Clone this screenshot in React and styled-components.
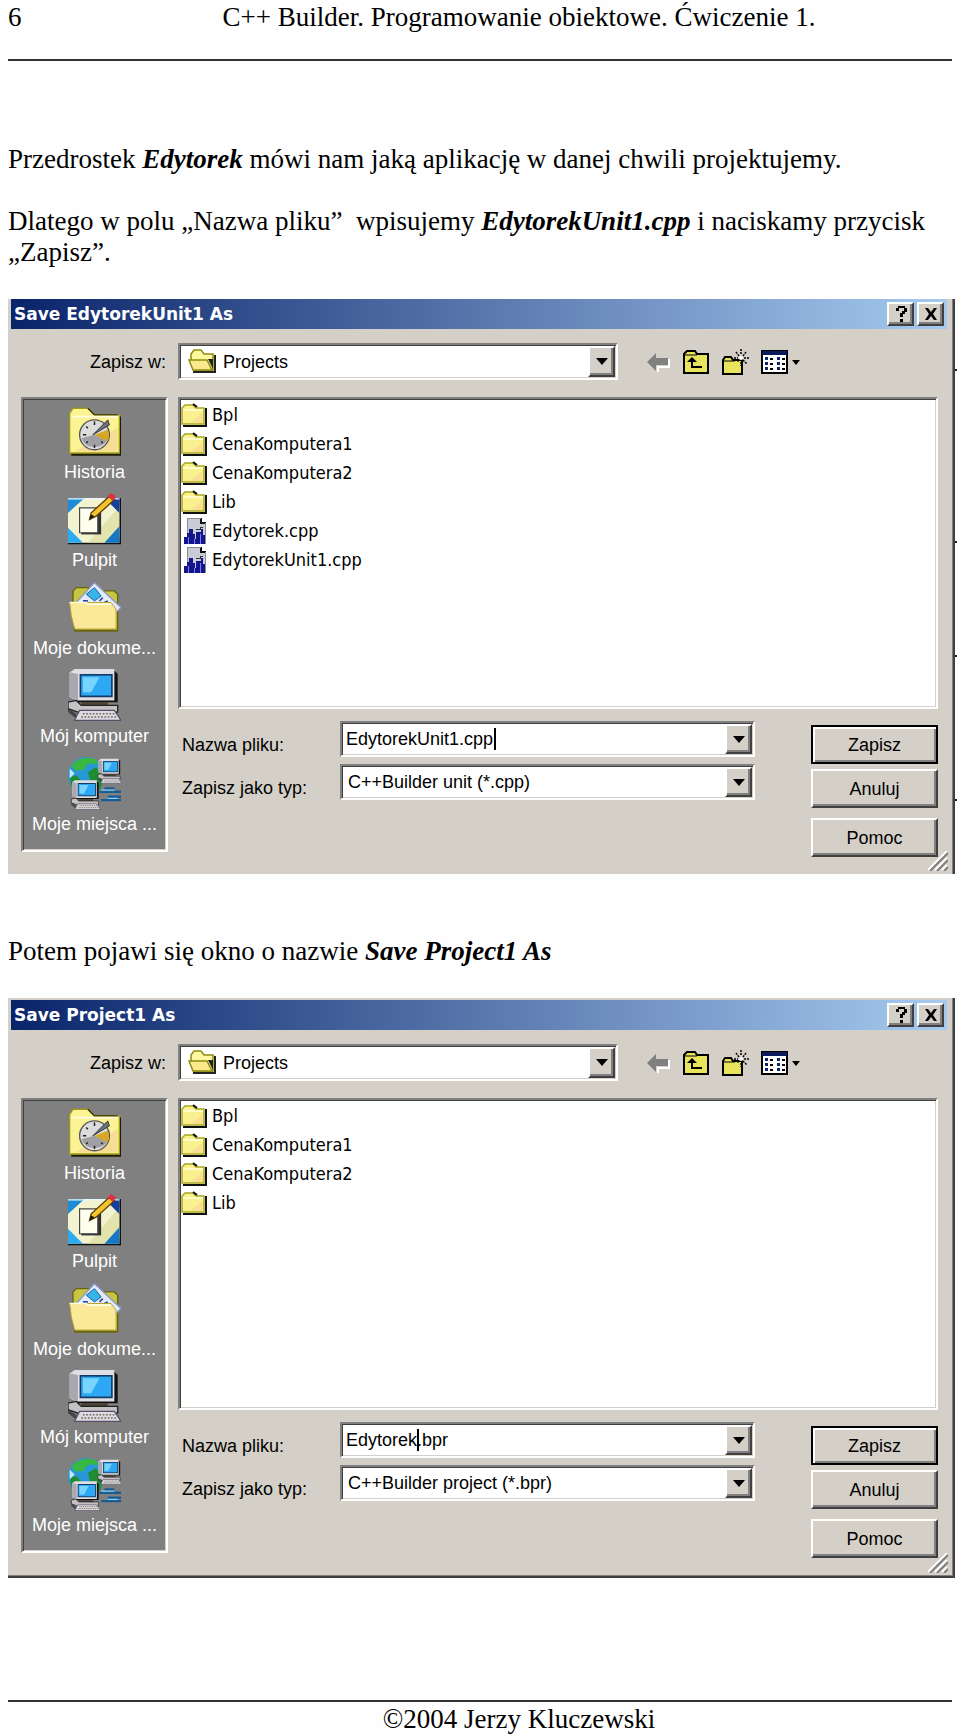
import React from "react";
import styled, { createGlobalStyle, css } from "styled-components";

const folders = ["Bpl", "CenaKomputera1", "CenaKomputera2", "Lib"];
const sources = ["Edytorek.cpp", "EdytorekUnit1.cpp"];

const App = () => (
  <>
    <GlobalStyle />
    <Page>
      <Header>
        <span>6</span>
        <HeaderTitle>C++ Builder. Programowanie obiektowe. Ćwiczenie 1.</HeaderTitle>
      </Header>
      <Rule />
      <Article>
        <Paragraph>
          Przedrostek <Term>Edytorek</Term> mówi nam jaką aplikację w danej chwili projektujemy.
        </Paragraph>
        <Paragraph>
          Dlatego w polu „Nazwa pliku”&nbsp; wpisujemy <Term>EdytorekUnit1.cpp</Term> i naciskamy
          przycisk „Zapisz”.
        </Paragraph>
        <SaveDialog
          id="unit"
          title="Save EdytorekUnit1 As"
          files={sources}
          fileName="EdytorekUnit1.cpp"
          fileType="C++Builder unit (*.cpp)"
          caretAt={148}
          marks={[70, 242, 356, 500]}
        />
        <Paragraph $spaced>
          Potem pojawi się okno o nazwie <Term>Save Project1 As</Term>
        </Paragraph>
        <SaveDialog
          id="project"
          title="Save Project1 As"
          files={[]}
          fileName="Edytorek.bpr"
          fileType="C++Builder project (*.bpr)"
          caretAt={71}
          marks={[]}
          framed
        />
      </Article>
      <Footer>
        <Rule />
        <FooterText>©2004 Jerzy Kluczewski</FooterText>
      </Footer>
    </Page>
  </>
);

export default App;

const SaveDialog = ({ id, title, files, fileName, fileType, caretAt, marks, framed }) => {
  const [name, setName] = React.useState(fileName);

  return (
    <Window $framed={framed} aria-label={title}>
      <TitleBar>
        <Title>{title}</Title>
        <TitleButton aria-label="Pomoc kontekstowa">
          <HelpIcon />
        </TitleButton>
        <TitleButton aria-label="Zamknij">
          <CloseIcon />
        </TitleButton>
      </TitleBar>

      <Body>
        <LookInLabel htmlFor={`${id}-folder`}>Zapisz w:</LookInLabel>
        <Toolbar>
          <LookIn>
            <OpenFolderSlot>
              <OpenFolderIcon />
            </OpenFolderSlot>
            <Select id={`${id}-folder`} $withIcon>
              <option>Projects</option>
            </Select>
            <DropArrow />
          </LookIn>
          <ToolButton aria-label="Wstecz"><BackIcon /></ToolButton>
          <ToolButton aria-label="W górę"><UpFolderIcon /></ToolButton>
          <ToolButton aria-label="Nowy folder"><NewFolderIcon /></ToolButton>
          <ToolButton aria-label="Widok"><ViewsIcon /></ToolButton>
        </Toolbar>

        <Places>
          {places.map(({ label, Icon }) => (
            <Place key={label}>
              <Icon />
              <PlaceLabel>{label}</PlaceLabel>
            </Place>
          ))}
        </Places>

        <Main>
          <FileList>
            {folders.map((f) => (
              <FileRow key={f}><FolderIcon />{f}</FileRow>
            ))}
            {files.map((f) => (
              <FileRow key={f}><CppIcon />{f}</FileRow>
            ))}
          </FileList>

          <Form>
            <Fields>
              <FieldLabel htmlFor={`${id}-name`}>Nazwa pliku:</FieldLabel>
              <Field>
                <Input id={`${id}-name`} value={name} onChange={(e) => setName(e.target.value)} />
                <Caret $at={caretAt} />
                <DropArrow />
              </Field>
              <FieldLabel htmlFor={`${id}-type`}>Zapisz jako typ:</FieldLabel>
              <Field>
                <Select id={`${id}-type`}>
                  <option>{fileType}</option>
                </Select>
                <DropArrow />
              </Field>
            </Fields>
            <Actions>
              <ActionButton $default>Zapisz</ActionButton>
              <ActionButton>Anuluj</ActionButton>
              <ActionButton $apart>Pomoc</ActionButton>
            </Actions>
          </Form>
        </Main>
      </Body>

      <Grip>
        <GripIcon />
      </Grip>
      {marks.map((m) => (
        <MarginMark key={m} $top={m} />
      ))}
    </Window>
  );
};

/* ---------- icons ---------- */

const DropArrow = () => (
  <ArrowBox aria-hidden="true">
    <svg width="12" height="7" viewBox="0 0 12 7">
      <path d="M0 0H12L6 7Z" fill="#000" />
    </svg>
  </ArrowBox>
);

const HelpIcon = () => (
  <svg width="12" height="16" viewBox="0 0 12 16" shapeRendering="crispEdges">
    <path d="M1 2H3V0H10V2H12V6H10V8H8V11H5V7H7V5H9V2H4V5H1ZM5 13H8V16H5Z" fill="#000" />
  </svg>
);

const CloseIcon = () => (
  <svg width="14" height="12" viewBox="0 0 14 12">
    <path d="M1 0H4L7 4L10 0H13L9 6L13 12H10L7 8L4 12H1L5 6Z" fill="#000" />
  </svg>
);

const BackIcon = () => (
  <svg width="24" height="26" viewBox="0 0 24 26">
    <path d="M11 23V18H22V10" fill="none" stroke="#fff" strokeWidth="2" />
    <path d="M0 13L9 4V9H21V16H9V22Z" fill="#808080" />
  </svg>
);

const UpFolderIcon = () => (
  <svg width="26" height="26" viewBox="0 0 26 26">
    <path d="M1 24V5L4 2H12L14 5H25V24Z" fill="#e8e45c" stroke="#000" strokeWidth="2" />
    <path d="M1 6H14" stroke="#000" strokeWidth="1" />
    <path d="M9 10V18H19" fill="none" stroke="#000" strokeWidth="2" />
    <path d="M4 13L9 8L14 13Z" fill="#000" />
  </svg>
);

const NewFolderIcon = () => (
  <svg width="28" height="28" viewBox="0 0 28 28">
    <path d="M2 26V12L4 9H10L12 12H21V26Z" fill="#e8e45c" stroke="#000" strokeWidth="2" />
    <path d="M2 13H14" stroke="#000" strokeWidth="1" />
    <path d="M20 1V7M20 14V18M13 10H17M23 10H28M15 4L18 8M25 4L22 8M22 12L26 16M18 12L16 14" stroke="#000" strokeWidth="1.5" strokeDasharray="2 1" />
    <circle cx="20" cy="10" r="2" fill="#fff" />
  </svg>
);

const ViewsIcon = () => (
  <svg width="40" height="24" viewBox="0 0 40 24">
    <rect x="1" y="1" width="25" height="22" fill="#fff" stroke="#000" strokeWidth="2" />
    <rect x="1" y="1" width="25" height="4" fill="#0a1a5c" />
    {[7, 12, 17].map((y) => (
      <g key={y}>
        <path d={`M4 ${y}H7V${y + 3}H4ZM16 ${y}H19V${y + 3}H16Z`} fill="#0a246a" />
        <path d={`M9 ${y + 2}H12M21 ${y + 2}H24`} stroke="#000" strokeWidth="2" />
      </g>
    ))}
    <path d="M31 10H39L35 15Z" fill="#000" />
  </svg>
);

const OpenFolderIcon = () => (
  <svg width="28" height="24" viewBox="0 0 28 24">
    <path d="M5 23H27V6" fill="none" stroke="#222" strokeWidth="2" />
    <path d="M3 10V5L6 1H13L16 5H25V21H6Z" fill="#fdf8a0" stroke="#8c8c10" strokeWidth="1.5" />
    <path d="M1 11H19L24 21H5Z" fill="#fbe98c" stroke="#8c8c10" strokeWidth="1.5" />
    <path d="M20 10L25 20V10Z" fill="#222" />
  </svg>
);

const FolderIcon = () => (
  <svg width="26" height="24" viewBox="0 0 26 24">
    <path d="M2 23H25V5" fill="none" stroke="#111" strokeWidth="2" />
    <path d="M1 21V5L4 2H12L15 5H23V21Z" fill="#fbf08e" stroke="#a8a820" strokeWidth="1.5" />
    <path d="M12 1L16 4" stroke="#111" strokeWidth="2" />
    <path d="M2 7H22" stroke="#fffcc8" strokeWidth="2" />
    <path d="M22 10V20H9Z" fill="#f6d493" opacity=".6" />
  </svg>
);

const CppIcon = () => (
  <svg width="26" height="28" viewBox="0 0 26 28" shapeRendering="crispEdges">
    <path d="M6 1H21L25 6V27H6Z" fill="#c9ccd6" />
    <path d="M20 1V6H25" fill="#fff" stroke="#111" strokeWidth="2" />
    <path d="M6 27V1H20M24 6V27" fill="none" stroke="#8a8c98" />
    <path d="M3 20H6V16H8V12H12V17H14V22H15V15H20V12H22V18H24V27H3Z" fill="#14148c" />
    <path d="M7 20V27M13 22V27M19 17V27" stroke="#7c7cf0" />
    <path d="M15 12H19V10H22" stroke="#333" fill="none" strokeWidth="1" />
  </svg>
);

const HistoryIcon = () => (
  <svg width="53" height="53" viewBox="0 0 32 32">
    <path d="M2 30H32V7" fill="none" stroke="#1c1c00" strokeWidth="1.4" />
    <path d="M1 29V5L3 2H12L16 6H31V29Z" fill="#fbf394" stroke="#a09c14" strokeWidth=".8" />
    <path d="M12 2L16 6H30" fill="none" stroke="#333200" strokeWidth=".8" />
    <path d="M2 7H30" stroke="#fffde0" />
    <path d="M30 14V28H4Z" fill="#f4cf92" opacity=".6" />
    <circle cx="16" cy="18" r="9" fill="#dcdcdc" stroke="#555" strokeWidth=".8" />
    <path d="M8 20A9 9 0 0 0 24 21L16 18Z" fill="#a0a0a4" />
    <path d="M16 18L24 15A9 9 0 0 1 24 22Z" fill="#d8a824" />
    <path d="M16 10V12M9 18H11M11 13L12 14M11 23L12 22M16 24V26M21 23L20 22" stroke="#222" strokeWidth=".9" />
    <path d="M15 18L24 9L25 12Z" fill="#70747c" stroke="#333" strokeWidth=".6" />
  </svg>
);

const DesktopIcon = () => (
  <svg width="53" height="53" viewBox="0 0 32 32">
    <path d="M0 3H32V31H0Z" fill="#111" />
    <path d="M0 3H31V30H0Z" fill="#f4f3cf" />
    <path d="M31 8V27L22 30H12Z" fill="#dcdba0" opacity=".7" />
    <path d="M0 3H10L0 12Z" fill="#1c8cd4" />
    <path d="M22 3H31V12Z" fill="#1040a0" />
    <path d="M0 21L9 30H0Z" fill="#2cacf0" />
    <path d="M31 20V30H22Z" fill="#1478c4" />
    <path d="M0 3.500H31" stroke="#e4f8ff" strokeWidth=".7" />
    <path d="M8 10H20V25H8Z" fill="#333" />
    <path d="M7 9H18V24H7Z" fill="#fffff0" stroke="#444" strokeWidth=".7" />
    <path d="M13 16L14 12L25 2L28 4L17 14Z" fill="#f4c430" stroke="#5c3c00" strokeWidth=".8" />
    <path d="M24 2L26 0L29 2L27 5Z" fill="#e03040" />
    <path d="M13 16L14 13L16 14Z" fill="#111" />
  </svg>
);

const DocumentsIcon = () => (
  <svg width="53" height="53" viewBox="0 0 32 32">
    <path d="M3 12V6L5 4H12L14 6H28L30 8V30H4Z" fill="#c8c444" stroke="#66640c" strokeWidth=".8" />
    <path d="M5 13L16 1L32 16L29 19Z" fill="#e4ecfc" stroke="#8c98c4" strokeWidth=".8" />
    <path d="M11 8L16 4L20 9L16 12Z" fill="#38b4e8" stroke="#1c60a4" strokeWidth=".6" />
    <path d="M9 12H12M19 12L21 10M22 13L24 12" stroke="#2848a0" />
    <path d="M1 13H26L29 17V29H4L2 21Z" fill="#fbe99a" stroke="#b8a030" strokeWidth=".6" />
    <path d="M1 13H11L12 14H26" fill="none" stroke="#fffde0" strokeWidth="1" />
    <path d="M4 30H30" stroke="#66640c" />
  </svg>
);

const Monitor = () => (
  <>
    <path d="M2 1H28L30 3V20H4Z" fill="#111" />
    <path d="M1 2L4 0H28V19H5L1 17Z" fill="#dedee4" />
    <path d="M1 2L6 3V19L1 17Z" fill="#a8a8ae" />
    <path d="M7 3H27V17H7Z" fill="#143a64" />
    <path d="M8 4H26V16H8Z" fill="#2ca8f4" />
    <path d="M9 5H19L14 14H9Z" fill="#78d4fc" />
    <path d="M8 20H24V22H8Z" fill="#4c4434" />
    <path d="M0 20L5 19L8 22H30V26H6L0 24Z" fill="#c4c2c4" stroke="#222" strokeWidth=".8" />
    <path d="M0 24L5 27V30L0 26Z" fill="#444" />
    <path d="M7 25H28L32 31H4Z" fill="#dcdae4" stroke="#555066" strokeWidth=".7" />
    <path d="M9 27H28M8 29H29" stroke="#77664c" strokeDasharray="1 1" />
  </>
);

const ComputerIcon = () => (
  <svg width="53" height="53" viewBox="0 0 32 32">
    <Monitor />
  </svg>
);

const NetworkIcon = () => (
  <svg width="53" height="53" viewBox="0 0 32 32">
    <circle cx="11" cy="11" r="11" fill="#2898d4" />
    <path d="M2 5Q8 -1 16 1L19 4L12 4L9 8L4 8Z" fill="#38b840" />
    <path d="M1 12L5 11L8 14L5 19L2 17ZM12 9L17 6L22 13L19 20L14 16Z" fill="#208c34" />
    <path d="M1 7L4 10L1 13Z" fill="#c8e8f8" />
    <path d="M19 21H32M22 19H28M24 24H32M20 26H32" stroke="#185c94" strokeWidth="1.4" />
    <path d="M20 20H28M24 25H30" stroke="#8cd0f4" strokeWidth=".7" />
    <g transform="translate(18 1) scale(.45 .48)"><Monitor /></g>
    <g transform="translate(2 14) scale(.55 .57)"><Monitor /></g>
  </svg>
);

const GripIcon = () => (
  <svg width="20" height="20" viewBox="0 0 20 20">
    <path d="M0 19L19 0M7 19L19 7M14 19L19 14" stroke="#fff" strokeWidth="2" />
    <path d="M2 20L20 2M9 20L20 9M16 20L20 16" stroke="#808080" strokeWidth="2" />
  </svg>
);

const places = [
  { label: "Historia", Icon: HistoryIcon },
  { label: "Pulpit", Icon: DesktopIcon },
  { label: "Moje dokume...", Icon: DocumentsIcon },
  { label: "Mój komputer", Icon: ComputerIcon },
  { label: "Moje miejsca ...", Icon: NetworkIcon },
];

/* ---------- styles ---------- */

const GlobalStyle = createGlobalStyle`
  * {
    box-sizing: border-box;
  }

  body {
    margin: 0;
    background: #fefefe;
    color: #000;
  }

  svg {
    display: block;
    flex: none;
  }
`;

const sunken = css`
  border: 2px solid;
  border-color: #808080 #fff #fff #808080;
  box-shadow: inset 1px 1px #404040, inset -1px -1px #d4d0c8;
  padding: 1px;
`;

const raised = css`
  border: 2px solid;
  border-color: #fff #404040 #404040 #fff;
  box-shadow: inset -2px -2px #808080;
  background: #d4d0c8;
`;

const uiFont = css`
  font-family: "Liberation Sans", Arial, sans-serif;
  font-size: 18px;
  line-height: 22px;
  color: #000;
`;

const Page = styled.div`
  padding: 2px 5px 0 8px;
  font-family: "Liberation Serif", "Times New Roman", serif;
  font-size: 27px;
  line-height: 31px;
`;

const Header = styled.header`
  display: grid;
  grid-template-columns: 75px 1fr;
  margin-bottom: 26px;
`;

const HeaderTitle = styled.div`
  text-align: center;
`;

const Rule = styled.hr`
  height: 2px;
  margin: 0 3px 0 0;
  border: none;
  background: #333;
`;

const Article = styled.main`
  padding-top: 83px;
`;

const Paragraph = styled.p`
  margin: ${({ $spaced }) => ($spaced ? "62px 0 31px" : "0 0 31px")};
`;

const Term = styled.strong`
  font-style: italic;
`;

const Footer = styled.footer`
  margin-top: 122px;
`;

const FooterText = styled.p`
  margin: 2px 0 0;
  padding-left: 75px;
  text-align: center;
`;

const Window = styled.section`
  ${uiFont}
  position: relative;
  border: solid #404040;
  border-width: ${({ $framed }) => ($framed ? "0 2px 2px 0" : "0 2px 0 0")};
  box-shadow: inset -1px ${({ $framed }) => ($framed ? "-1px" : "0")} #808080;
  padding: ${({ $framed }) => ($framed ? "2px 0 1px" : "0")};
  background: #d4d0c8;
`;

const TitleBar = styled.div`
  display: flex;
  align-items: center;
  gap: 3px;
  height: 30px;
  margin: 0 6px 0 3px;
  padding: 0 3px;
  background: linear-gradient(to right, #0a246a, #a6caf0);
`;

const Title = styled.h2`
  flex: 1;
  margin: 0;
  font-family: "DejaVu Sans", Verdana, sans-serif;
  font-size: 17px;
  font-weight: 700;
  color: #fff;
`;

const TitleButton = styled.button`
  ${raised}
  display: flex;
  align-items: center;
  justify-content: center;
  width: 27px;
  height: 24px;
  padding: 0;
`;

const Body = styled.div`
  display: grid;
  grid-template-columns: 147px 1fr;
  gap: 17px 10px;
  padding: 14px 15px 17px 13px;
`;

const LookInLabel = styled.label`
  align-self: center;
  padding-right: 2px;
  text-align: right;
`;

const Toolbar = styled.div`
  display: flex;
  align-items: center;
  gap: 12px;
`;

const Field = styled.div`
  ${sunken}
  position: relative;
  display: flex;
  height: 36px;
  background: #fff;
`;

const LookIn = styled(Field)`
  flex: 0 1 440px;
  height: 37px;
  margin-right: 17px;
`;

const OpenFolderSlot = styled.span`
  position: absolute;
  left: 8px;
  top: 4px;
  pointer-events: none;
`;

const Select = styled.select`
  ${uiFont}
  appearance: none;
  flex: 1;
  min-width: 0;
  padding: 0 28px 0 ${({ $withIcon }) => ($withIcon ? "42px" : "5px")};
  border: none;
  outline: none;
  background: transparent;
`;

const Input = styled.input`
  ${uiFont}
  flex: 1;
  min-width: 0;
  padding: 0 28px 0 3px;
  border: none;
  outline: none;
  background: transparent;
`;

const Caret = styled.span`
  position: absolute;
  left: ${({ $at }) => $at + 4}px;
  top: 5px;
  width: 2px;
  height: 22px;
  background: #000;
`;

const ArrowBox = styled.span`
  ${raised}
  position: absolute;
  top: 1px;
  right: 1px;
  bottom: 1px;
  display: flex;
  align-items: center;
  justify-content: center;
  width: 27px;
  pointer-events: none;
`;

const ToolButton = styled.button`
  padding: 0;
  border: none;
  background: none;
`;

const Places = styled.nav`
  ${sunken}
  align-self: start;
  height: 455px;
  padding-top: 6px;
  background: #808080;
`;

const Place = styled.button`
  ${uiFont}
  display: flex;
  flex-direction: column;
  align-items: center;
  gap: 3px;
  width: 100%;
  height: 88px;
  padding: 0;
  border: none;
  background: none;
  color: #fff;
`;

const PlaceLabel = styled.span`
  white-space: nowrap;
`;

const Main = styled.div`
  display: flex;
  flex-direction: column;
  gap: 12px;
  min-width: 0;
`;

const FileList = styled.ul`
  ${sunken}
  height: 312px;
  margin: 0;
  list-style: none;
  background: #fff;
  font-family: "DejaVu Sans Condensed", "Liberation Sans", sans-serif;
`;

const FileRow = styled.li`
  display: flex;
  align-items: center;
  gap: 5px;
  height: 29px;
`;

const Form = styled.div`
  display: flex;
  justify-content: space-between;
  gap: 56px;
`;

const Fields = styled.div`
  flex: 1;
  display: grid;
  grid-template-columns: 162px 1fr;
  gap: 7px 0;
  align-content: start;
`;

const FieldLabel = styled.label`
  padding: 13px 0 0 4px;
`;

const Actions = styled.div`
  display: flex;
  flex-direction: column;
  gap: 5px;
  width: 127px;
  padding-top: 4px;
`;

const ActionButton = styled.button`
  ${uiFont}
  ${raised}
  height: 39px;
  margin-top: ${({ $apart }) => ($apart ? "5px" : "0")};
  padding: 0;
  ${({ $default }) =>
    $default &&
    css`
      border-color: #000;
      box-shadow: inset 2px 2px #fff, inset -2px -2px #808080;
    `}
`;

const Grip = styled.div`
  position: absolute;
  right: 5px;
  bottom: 3px;
`;

const MarginMark = styled.span`
  position: absolute;
  top: ${({ $top }) => $top}px;
  right: -4px;
  width: 2px;
  height: 2px;
  background: #222;
`;
